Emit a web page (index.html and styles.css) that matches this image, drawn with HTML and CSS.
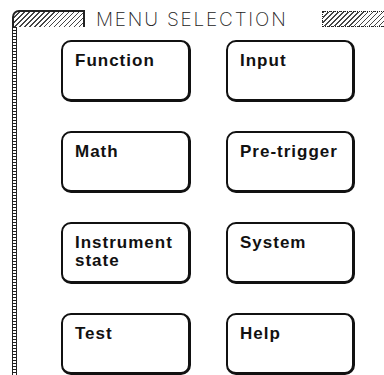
FILE: index.html
```html
<html>
	<head>
		<title>Menu Selection</title>
		<link rel="stylesheet" href="styles.css">
	</head>
	<body>
		<div class="screen">
			<div class="head">
				<div class="hatch hatch-corner"></div>
				<div class="title">MENU SELECTION</div>
				<div class="hatch hatch-end"></div>
			</div>
			<div class="main">
				<div class="rail"></div>
				<div class="keys">
					<div class="key">Function</div>
					<div class="key">Input</div>
					<div class="key">Math</div>
					<div class="key">Pre-trigger</div>
					<div class="key">Instrument<br>state</div>
					<div class="key">System</div>
					<div class="key">Test</div>
					<div class="key">Help</div>
				</div>
			</div>
		</div>
	</body>
</html>
```

FILE: styles.css
```css
html, body {
	margin: 0;
	background: #ffffff;
}

.screen {
	width: 384px;
	height: 375px;
	overflow: hidden;
	box-sizing: border-box;
	padding: 10px 0 0 12px;
}

.head {
	display: flex;
	align-items: center;
	height: 17px;
}

.hatch {
	box-sizing: border-box;
	height: 17px;
	border: 1px dotted #222;
	background: repeating-linear-gradient(135deg, #444 0 1px, #fff 1px 3.5px);
}

.hatch-corner {
	width: 73px;
	border: 2px solid #222;
	border-bottom: none;
	border-radius: 7px 0 0 0;
}

.title {
	margin-left: 11px;
	font-family: "Inter", "DejaVu Sans", sans-serif;
	font-weight: 200;
	font-size: 19px;
	letter-spacing: 1.8px;
	color: #222;
	white-space: nowrap;
	position: relative;
	top: 1px;
}

.hatch-end {
	margin-left: auto;
	width: 62px;
	height: 16px;
	border-right: none;
}

.main {
	display: flex;
}

.rail {
	width: 3px;
	height: 360px;
	border-left: 1px solid #222;
	border-right: 1px solid #222;
	background: repeating-linear-gradient(180deg, #222 0 1px, #fff 1px 3px);
}

.keys {
	display: grid;
	grid-template-columns: 130px 129px;
	grid-auto-rows: 62px;
	gap: 29px 35px;
	margin: 13px 0 0 44px;
}

.key {
	box-sizing: border-box;
	border: 2px solid #111;
	border-right-width: 3px;
	border-bottom-width: 3px;
	border-radius: 10px;
	padding: 10px 0 0 12px;
	font-family: "Liberation Sans", Arial, sans-serif;
	font-weight: bold;
	font-size: 17px;
	line-height: 18px;
	letter-spacing: 1px;
	color: #111;
}
```
